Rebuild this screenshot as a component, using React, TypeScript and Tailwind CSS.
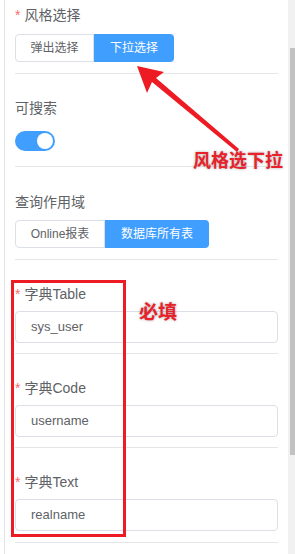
const font = "font-['Liberation_Sans','Noto_Sans_CJK_SC',sans-serif]"

function Label({ text, required }: { text: string; required?: boolean }) {
  return (
    <div className="flex h-5 items-center text-[14px] text-[#606266]">
      {required && <span className="mr-[4px] text-[#f56c6c]">*</span>}
      <span>{text}</span>
    </div>
  )
}

function Segmented({ items, active }: { items: { label: string; w: string }[]; active: number }) {
  return (
    <div className="flex h-[28px]">
      {items.map((it, i) => (
        <div
          key={it.label}
          className={
            'flex items-center justify-center text-[12px] ' +
            it.w +
            ' ' +
            (i === active
              ? 'bg-[#409eff] text-white'
              : 'border border-[#dcdfe6] text-[#606266]') +
            (i === 0 ? ' rounded-l-[4px]' : '') +
            (i === items.length - 1 ? ' rounded-r-[4px]' : '')
          }
        >
          {it.label}
        </div>
      ))}
    </div>
  )
}

function Field({ value }: { value: string }) {
  return (
    <div className="flex h-[32px] items-center rounded-[4px] border border-[#dcdfe6] pl-[15px] text-[13px] text-[#606266]">
      {value}
    </div>
  )
}

function Divider({ mt }: { mt: string }) {
  return <div className={'h-px bg-[#e4e6ea] ' + mt} />
}

export default function App() {
  return (
    <div className={'relative flex h-[554px] w-[295px] overflow-hidden bg-white ' + font}>
      <div className="ml-[4px] w-px bg-[#e4e4e4]" />

      <div className="w-[283px] px-[10px]">
        <div className="mt-[5px]">
          <Label text="风格选择" required />
        </div>
        <div className="mt-[9px]">
          <Segmented
            active={1}
            items={[
              { label: '弹出选择', w: 'w-[79px]' },
              { label: '下拉选择', w: 'w-[80px]' },
            ]}
          />
        </div>
        <Divider mt="mt-[11px]" />

        <div className="mt-[24px]">
          <Label text="可搜索" />
        </div>
        <div className="mt-[13px] flex h-[20px] w-[40px] items-center justify-end rounded-full bg-[#409eff] pr-[2px]">
          <div className="h-[16px] w-[16px] rounded-full bg-white" />
        </div>
        <Divider mt="mt-[15px]" />

        <div className="mt-[25px]">
          <Label text="查询作用域" />
        </div>
        <div className="mt-[8px]">
          <Segmented
            active={1}
            items={[
              { label: 'Online报表', w: 'w-[90px]' },
              { label: '数据库所有表', w: 'w-[104px]' },
            ]}
          />
        </div>
        <Divider mt="mt-[11px]" />

        <div className="mt-[24px]">
          <Label text="字典Table" required />
        </div>
        <div className="mt-[7px]">
          <Field value="sys_user" />
        </div>
        <Divider mt="mt-[10px]" />

        <div className="mt-[24px]">
          <Label text="字典Code" required />
        </div>
        <div className="mt-[7px]">
          <Field value="username" />
        </div>
        <Divider mt="mt-[10px]" />

        <div className="mt-[24px]">
          <Label text="字典Text" required />
        </div>
        <div className="mt-[7px]">
          <Field value="realname" />
        </div>
        <Divider mt="mt-[11px]" />
      </div>

      {/* scrollbar */}
      <div className="w-[7px] bg-[#f1f1f1]">
        <div className="ml-[2px] mt-[48px] h-[407px] bg-[#c1c1c1]" />
      </div>

      {/* annotations */}
      <svg className="pointer-events-none absolute left-0 top-0" width="295" height="554" viewBox="0 0 295 554">
        <polygon points="137,66 164,72 156,78 239,149 237,152 152,82 147,93" fill="#ed1c24" />
      </svg>
      <div className="pointer-events-none absolute left-[11px] top-[280px] h-[257px] w-[115px] border-[3px] border-[#ed1c24]" />
      <div className="pointer-events-none absolute left-[193px] top-[149px] text-[18px] font-bold leading-[24px] text-[#e8212a] [text-shadow:0_0_3px_rgba(0,0,0,0.35)]">
        风格选下拉
      </div>
      <div className="pointer-events-none absolute left-[139px] top-[300px] text-[19px] font-bold leading-[26px] text-[#e8212a] [text-shadow:0_0_3px_rgba(0,0,0,0.35)]">
        必填
      </div>
    </div>
  )
}
